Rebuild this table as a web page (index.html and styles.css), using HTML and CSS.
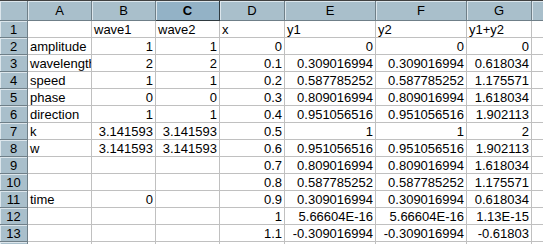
FILE: index.html
```html
<!DOCTYPE html>
<html>
<head>
<meta charset="utf-8">
<link rel="stylesheet" href="styles.css">
</head>
<body>
<div class="topbar"></div>
<div class="sheet">
  <div class="corner"></div>
  <div class="ch">A</div><div class="ch">B</div><div class="ch sel">C</div><div class="ch">D</div><div class="ch">E</div><div class="ch">F</div><div class="ch">G</div><div class="ch last"></div>

  <div class="rh">1</div><div class="c"></div><div class="c">wave1</div><div class="c">wave2</div><div class="c">x</div><div class="c">y1</div><div class="c">y2</div><div class="c">y1+y2</div><div class="c"></div>
  <div class="rh">2</div><div class="c">amplitude</div><div class="c n">1</div><div class="c n">1</div><div class="c n">0</div><div class="c n">0</div><div class="c n">0</div><div class="c n">0</div><div class="c"></div>
  <div class="rh">3</div><div class="c">wavelength</div><div class="c n">2</div><div class="c n">2</div><div class="c n">0.1</div><div class="c n">0.309016994</div><div class="c n">0.309016994</div><div class="c n">0.618034</div><div class="c"></div>
  <div class="rh">4</div><div class="c">speed</div><div class="c n">1</div><div class="c n">1</div><div class="c n">0.2</div><div class="c n">0.587785252</div><div class="c n">0.587785252</div><div class="c n">1.175571</div><div class="c"></div>
  <div class="rh">5</div><div class="c">phase</div><div class="c n">0</div><div class="c n">0</div><div class="c n">0.3</div><div class="c n">0.809016994</div><div class="c n">0.809016994</div><div class="c n">1.618034</div><div class="c"></div>
  <div class="rh">6</div><div class="c">direction</div><div class="c n">1</div><div class="c n">1</div><div class="c n">0.4</div><div class="c n">0.951056516</div><div class="c n">0.951056516</div><div class="c n">1.902113</div><div class="c"></div>
  <div class="rh">7</div><div class="c">k</div><div class="c n">3.141593</div><div class="c n">3.141593</div><div class="c n">0.5</div><div class="c n">1</div><div class="c n">1</div><div class="c n">2</div><div class="c"></div>
  <div class="rh">8</div><div class="c">w</div><div class="c n">3.141593</div><div class="c n">3.141593</div><div class="c n">0.6</div><div class="c n">0.951056516</div><div class="c n">0.951056516</div><div class="c n">1.902113</div><div class="c"></div>
  <div class="rh">9</div><div class="c"></div><div class="c"></div><div class="c"></div><div class="c n">0.7</div><div class="c n">0.809016994</div><div class="c n">0.809016994</div><div class="c n">1.618034</div><div class="c"></div>
  <div class="rh">10</div><div class="c"></div><div class="c"></div><div class="c"></div><div class="c n">0.8</div><div class="c n">0.587785252</div><div class="c n">0.587785252</div><div class="c n">1.175571</div><div class="c"></div>
  <div class="rh">11</div><div class="c">time</div><div class="c n">0</div><div class="c"></div><div class="c n">0.9</div><div class="c n">0.309016994</div><div class="c n">0.309016994</div><div class="c n">0.618034</div><div class="c"></div>
  <div class="rh">12</div><div class="c"></div><div class="c"></div><div class="c"></div><div class="c n">1</div><div class="c n">5.66604E-16</div><div class="c n">5.66604E-16</div><div class="c n">1.13E-15</div><div class="c"></div>
  <div class="rh">13</div><div class="c"></div><div class="c"></div><div class="c"></div><div class="c n">1.1</div><div class="c n">-0.309016994</div><div class="c n">-0.309016994</div><div class="c n">-0.61803</div><div class="c"></div>
  <div class="rh"></div><div class="c"></div><div class="c"></div><div class="c"></div><div class="c"></div><div class="c"></div><div class="c"></div><div class="c"></div><div class="c"></div>
</div>
</body>
</html>
```

FILE: styles.css
```css
* { box-sizing: border-box; }
html, body { margin: 0; padding: 0; background: #ffffff; }
body { width: 543px; height: 244px; overflow: hidden; font-family: "Liberation Sans", Arial, sans-serif; font-size: 13px; color: #000; }
.topbar { height: 1px; background: #404040; }
.sheet {
  display: grid;
  grid-template-columns: 28px 64px 64px 64px 65px 91px 91px 65px 12px;
  grid-template-rows: 20px repeat(13, 17px) 2px;
}
.corner, .ch, .rh {
  background: #a9bfcb;
  border-right: 1px solid #6f7f88;
  border-bottom: 1px solid #6f7f88;
  box-shadow: inset 1px 1px 0 #dce6ec;
  display: flex;
  align-items: center;
  justify-content: center;
  line-height: 16px;
  overflow: hidden;
  white-space: nowrap;
}
.ch { padding-top: 1px; }
.ch.sel { background: #93b2c6; font-weight: bold; border-right-color: #2f3a40; border-bottom-color: #2f3a40; }
.rh { padding-top: 1px; }
.c {
  border-right: 1px solid #c0c0c0;
  border-bottom: 1px solid #c0c0c0;
  padding: 2px 2px 0 2px;
  line-height: 14px;
  white-space: nowrap;
  overflow: hidden;
}
.rh:last-of-type, .sheet > :nth-last-child(-n+9) { border-bottom: 0; }
.n { text-align: right; }
```
